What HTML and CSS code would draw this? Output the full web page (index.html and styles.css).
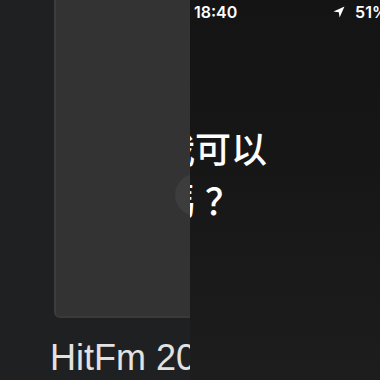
FILE: index.html
```html
<!DOCTYPE html>
<html lang="zh">
<head>
<meta charset="utf-8">
<link rel="stylesheet" href="styles.css">
</head>
<body>
<div class="screen">
  <div class="left">
    <div class="card-wrap">
      <div class="card">
        <div class="play"></div>
      </div>
    </div>
    <div class="title">HitFm 2023</div>
  </div>
  <div class="right">
    <div class="status">
      <span class="time">18:40</span>
      <span class="status-right">
        <svg class="loc" width="12" height="12" viewBox="0 0 12 12"><path d="M11.5 0.5 L0.5 5.4 L5.8 6.2 L6.6 11.5 Z" fill="#fff"/></svg>
        <span class="batt">51%</span>
      </span>
    </div>
    <div class="prompt">
      <div class="line">我可以</div>
      <div class="line">嗎<span class="qmark">？</span></div>
    </div>
  </div>
</div>
</body>
</html>
```
FILE: styles.css
```css
html, body {
  margin: 0;
  padding: 0;
  background: #1f2022;
}
.screen {
  display: flex;
  width: 380px;
  height: 380px;
  overflow: hidden;
}
.left {
  width: 190px;
  flex: none;
  background: #1f2022;
  overflow: hidden;
  display: flex;
  flex-direction: column;
}
.card-wrap {
  padding-left: 54px;
  height: 318px;
  flex: none;
}
.card {
  box-sizing: border-box;
  width: 282px;
  height: 318px;
  background: #333333;
  border-left: 2px solid #3d3d3d;
  border-bottom: 2px solid #393939;
  border-radius: 0 0 6px 6px;
  display: flex;
  justify-content: center;
  padding-top: 174px;
}
.play {
  width: 42px;
  height: 42px;
  border-radius: 50%;
  background: #3d3d3d;
}
.title {
  margin-top: 19px;
  padding-left: 50px;
  font-family: "Liberation Sans", Arial, sans-serif;
  font-size: 36px;
  line-height: 41px;
  color: #e2e2e2;
  white-space: nowrap;
}
.right {
  width: 190px;
  flex: none;
  background: linear-gradient(180deg, #141414 0%, #161616 40%, #1d1d1d 100%);
  overflow: hidden;
  display: flex;
  flex-direction: column;
}
.status {
  display: flex;
  justify-content: space-between;
  align-items: center;
  height: 24px;
  padding-left: 4px;
  font-family: "Inter", "Liberation Sans", sans-serif;
  font-weight: 600;
  font-size: 16px;
  color: #ffffff;
}
.status-right {
  display: flex;
  align-items: center;
  gap: 10px;
  white-space: nowrap;
  margin-right: -8px;
}
.loc {
  display: block;
}
.prompt {
  margin-top: 97px;
  margin-left: -31px;
  font-family: "Noto Sans CJK TC", "Noto Sans CJK SC", sans-serif;
  font-weight: 500;
  font-size: 36px;
  line-height: 52px;
  color: #ffffff;
  white-space: nowrap;
}
.qmark {
  margin-left: 10px;
}
```
